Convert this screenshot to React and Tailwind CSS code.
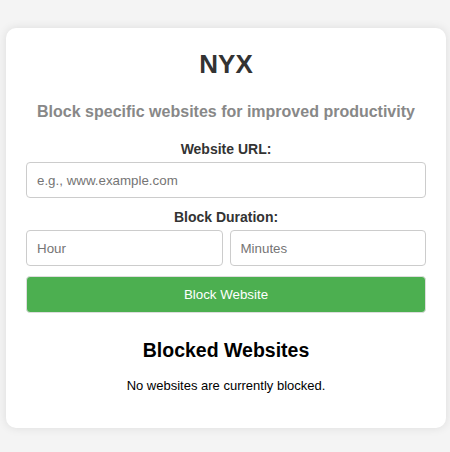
import { useState } from "react"

export default function App() {
  const [url, setUrl] = useState("")
  const [hour, setHour] = useState("")
  const [minutes, setMinutes] = useState("")
  const [blocked] = useState([])

  return (
    <div className="min-h-screen bg-[#f4f4f4] pt-[28px] pl-[6px] pr-[4px] font-['Liberation_Sans',Arial,sans-serif]">
      <div className="bg-white rounded-[10px] shadow-[0_0_10px_rgba(0,0,0,0.1)] px-[20px] pt-[20px] pb-[33px] text-center">
        {/* Cabecera */}
        <h1 className="text-[26px] leading-[32px] font-bold text-[#333]">NYX</h1>
        <p className="mt-[21px] text-[16px] leading-[22px] font-bold text-[#888] whitespace-nowrap">
          Block specific websites for improved productivity
        </p>

        {/* Formulario */}
        <div className="mt-[17px]">
          <label className="block text-[14px] leading-[18px] font-bold text-[#333]">Website URL:</label>
          <input
            type="text"
            value={url}
            onChange={(e) => setUrl(e.target.value)}
            placeholder="e.g., www.example.com"
            className="mt-[4px] w-full h-[36px] px-[10px] border border-[#ccc] rounded-[4px] text-[13.33px] text-[#333] placeholder:text-[#757575] outline-none"
          />
        </div>

        <div className="mt-[10px]">
          <label className="block text-[14px] leading-[18px] font-bold text-[#333]">Block Duration:</label>
          <div className="mt-[4px] flex gap-[7px]">
            <input
              type="number"
              value={hour}
              onChange={(e) => setHour(e.target.value)}
              placeholder="Hour"
              className="flex-1 min-w-0 h-[36px] px-[10px] border border-[#ccc] rounded-[4px] text-[13.33px] text-[#333] placeholder:text-[#757575] outline-none"
            />
            <input
              type="number"
              value={minutes}
              onChange={(e) => setMinutes(e.target.value)}
              placeholder="Minutes"
              className="flex-1 min-w-0 h-[36px] px-[10px] border border-[#ccc] rounded-[4px] text-[13.33px] text-[#333] placeholder:text-[#757575] outline-none"
            />
          </div>
        </div>

        <button className="mt-[10px] w-full h-[37px] bg-[#4caf50] text-white text-[13.33px] rounded-[4px] border border-[#ddd]">
          Block Website
        </button>

        {/* Lista de bloqueados */}
        <h2 className="mt-[25px] text-[19.5px] leading-[24px] font-bold text-black">Blocked Websites</h2>
        {blocked.length === 0 && (
          <p className="mt-[15px] text-[13px] leading-[18px] text-black">No websites are currently blocked.</p>
        )}
      </div>
    </div>
  )
}
